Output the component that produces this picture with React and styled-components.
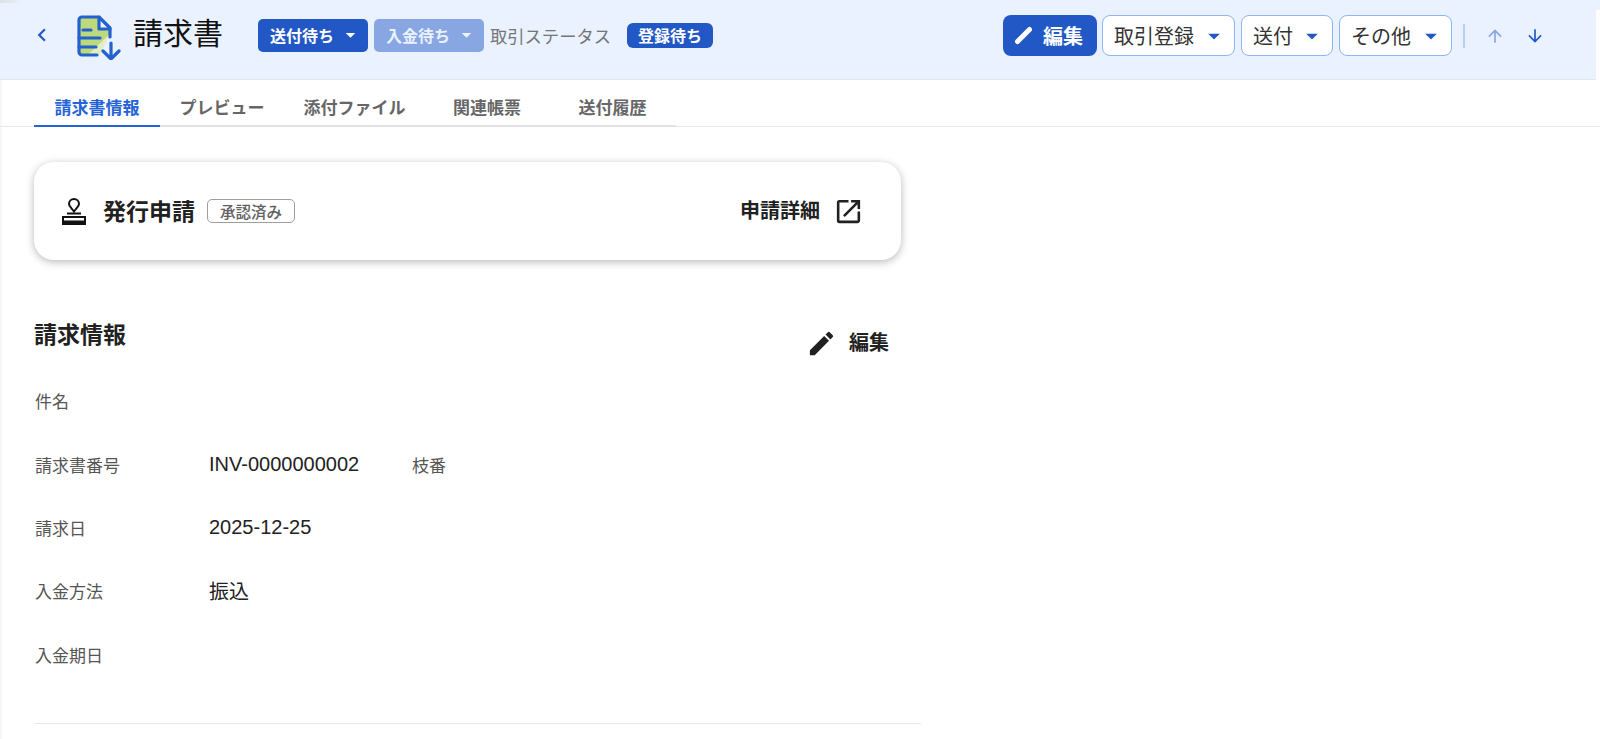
import React from 'react';
import styled, { createGlobalStyle } from 'styled-components';
import { MdEdit, MdOpenInNew, MdArrowDropDown, MdArrowUpward, MdArrowDownward, MdChevronLeft } from 'react-icons/md';

const FONT = `Roboto, "Noto Sans CJK JP", sans-serif`;

const GlobalStyle = createGlobalStyle`
  html, body {
    margin: 0;
    padding: 0;
    background: #fff;
    font-family: ${FONT};
    color: #212121;
    overflow: hidden;
  }
  * {
    box-sizing: border-box;
  }
`;

const Page = styled.div`
  width: 1600px;
  height: 739px;
  display: flex;
  flex-direction: column;
  background: linear-gradient(to right, #f3f3f3, #fff 3px);
`;

const Header = styled.header`
  position: relative;
  height: 80px;
  padding: 15px 55px 0 29px;
  display: flex;
  align-items: flex-start;
  background: #e9f2fe;
  border-bottom: 1px solid #e3e6ea;
  &::before {
    content: '';
    position: absolute;
    left: 0;
    top: 0;
    width: 22px;
    height: 3px;
    background: linear-gradient(to right, #dcdfe4, #e9f2fe);
  }
  &::after {
    content: '';
    position: absolute;
    right: 0;
    top: 10px;
    bottom: -1px;
    width: 4px;
    background: #fdfdfd;
  }
`;

const BackButton = styled.span`
  width: 26px;
  height: 40px;
  margin-right: 21px;
  display: flex;
  align-items: center;
  justify-content: center;
  color: #2258c5;
  font-size: 28px;
`;

const LogoSvg = styled.svg`
  width: 46px;
  height: 46px;
  margin-top: -1px;
  flex: none;
`;

const Title = styled.h1`
  margin: 0 35px 0 11px;
  font-size: 30px;
  line-height: 38px;
  font-weight: 400;
  color: #111;
`;

const StatusGroup = styled.div`
  height: 40px;
  display: flex;
  align-items: center;
  gap: 6px;
`;

const StatusButton = styled.span`
  width: 110px;
  height: 33px;
  padding: 0 6px 1px 12px;
  display: flex;
  align-items: center;
  gap: 5px;
  border-radius: 5px;
  background: ${(p) => (p.$muted ? '#88a6e2' : '#2258c5')};
  color: ${(p) => (p.$muted ? '#e9f2fe' : '#fff')};
  font-size: 16px;
  font-weight: 700;
  white-space: nowrap;
  svg {
    font-size: 24px;
  }
`;

const StatusLabel = styled.span`
  font-size: 17.3px;
  color: #757575;
`;

const StatusBadge = styled.span`
  width: 86px;
  height: 25px;
  margin-left: 10px;
  padding-bottom: 1px;
  display: flex;
  align-items: center;
  justify-content: center;
  border-radius: 6px;
  background: #2258c5;
  color: #fff;
  font-size: 16px;
  font-weight: 700;
`;

const Actions = styled.div`
  height: 41px;
  margin-left: auto;
  display: flex;
  align-items: center;
  gap: 6px;
`;

const PrimaryButton = styled.span`
  width: 94px;
  height: 41px;
  margin-right: -1px;
  padding-left: 11px;
  display: flex;
  align-items: center;
  gap: 10px;
  border-radius: 8px;
  background: #2258c5;
  color: #fff;
  font-size: 20px;
  font-weight: 700;
`;

const MenuButton = styled.span`
  width: ${(p) => p.$width}px;
  height: 41px;
  padding: 0 6px 0 11px;
  display: flex;
  align-items: center;
  justify-content: space-between;
  border: 1px solid #8fb4f2;
  border-radius: 8px;
  background: #fff;
  color: #333;
  font-size: 20px;
  svg {
    font-size: 28px;
    color: #2258c5;
  }
`;

const Divider = styled.span`
  width: 2px;
  height: 24px;
  margin: 0 14px 0 5px;
  background: #b7cdf2;
`;

const ArrowButton = styled.span`
  display: flex;
  color: ${(p) => (p.$faded ? '#88a6e2' : '#2258c5')};
  font-size: 20px;
  margin-right: ${(p) => (p.$faded ? 14 : 0)}px;
`;

const Tabs = styled.nav`
  height: 47px;
  display: flex;
  align-items: stretch;
  border-bottom: 1px solid #e8e8e8;
`;

const TabList = styled.div`
  margin-left: 34px;
  margin-bottom: -1px;
  display: flex;
  border-bottom: 2px solid #e3e3e3;
`;

const Tab = styled.span`
  width: ${(p) => p.$width}px;
  margin-bottom: -2px;
  padding-top: 17px;
  line-height: 23px;
  text-align: center;
  font-size: 17px;
  font-weight: 700;
  color: ${(p) => (p.$active ? '#2563d9' : '#666')};
  border-bottom: 2px solid ${(p) => (p.$active ? '#2563d9' : 'transparent')};
`;

const Content = styled.main`
  width: 887px;
  margin-left: 34px;
  padding-top: 35px;
`;

const ApplyCard = styled.section`
  width: 867px;
  height: 98px;
  padding: 0 37px 0 28px;
  display: flex;
  align-items: center;
  border-radius: 20px;
  background: #fff;
  box-shadow: 0 2px 8px rgba(0, 0, 0, 0.28);
`;

const StampIcon = styled.svg`
  width: 24px;
  height: 28px;
  margin-right: 17px;
`;

const CardTitle = styled.h2`
  margin: 0 12px 3px 0;
  font-size: 23px;
  font-weight: 700;
`;

const ApprovedTag = styled.span`
  width: 88px;
  height: 24px;
  padding-bottom: 1px;
  display: flex;
  align-items: center;
  justify-content: center;
  border: 1px solid #9e9e9e;
  border-radius: 5px;
  font-size: 15.5px;
  font-weight: 500;
  color: #616161;
`;

const DetailLink = styled.span`
  margin-left: auto;
  display: flex;
  align-items: center;
  gap: 13px;
  font-size: 20px;
  font-weight: 700;
  svg {
    font-size: 31px;
  }
`;

const LinkText = styled.span`
  margin-bottom: 3px;
`;

const SectionHead = styled.div`
  height: 56px;
  margin-top: 53px;
  padding-right: 32px;
  display: flex;
  justify-content: space-between;
`;

const SectionTitle = styled.h2`
  margin: 7px 0 0;
  font-size: 23px;
  line-height: 32px;
  font-weight: 700;
`;

const EditLink = styled.span`
  height: 34px;
  margin-top: 13px;
  display: flex;
  align-items: center;
  gap: 12px;
  font-size: 20px;
  font-weight: 700;
  svg {
    font-size: 31px;
  }
`;

const FieldList = styled.dl`
  margin: 0;
  padding-bottom: 37px;
  border-bottom: 1px solid #e8e8e8;
`;

const FieldRow = styled.div`
  height: 63.4px;
  padding-left: 1px;
  display: grid;
  grid-template-columns: 174px 203px auto;
  align-items: center;
`;

const FieldLabel = styled.dt`
  font-size: 17px;
  color: #555;
`;

const FieldValue = styled.dd`
  margin: 0;
  font-family: "Liberation Sans", "Noto Sans CJK JP", sans-serif;
  font-size: 20px;
  color: #222;
`;

function InvoiceIcon() {
  return (
    <LogoSvg viewBox="0 0 46 46" fill="none">
      <path d="M3 3h20v12h11v5L12 41H3z" fill="#bcd97c" />
      <path d="M34 20L24 41H12z" fill="#e2edc4" />
      <g stroke="#2461cf" strokeWidth="3.2" strokeLinecap="round" strokeLinejoin="round">
        <path d="M21 41H6a3 3 0 0 1-3-3V6a3 3 0 0 1 3-3h17l11 11v9" />
        <path d="M23 3v12h11" />
        <path d="M7 16h8M3 24h21M3 33h17" />
        <path d="M35 29v16M27 37l8 8 8-8" />
      </g>
    </LogoSvg>
  );
}

function SolidPencil() {
  return (
    <svg width="19" height="19" viewBox="0 0 19 19" fill="none">
      <path d="M3.5 15.5L15.5 3.5" stroke="#fff" strokeWidth="5" strokeLinecap="round" />
    </svg>
  );
}

export default function App() {
  return (
    <Page>
      <GlobalStyle />
      <Header>
        <BackButton>
          <MdChevronLeft />
        </BackButton>
        <InvoiceIcon />
        <Title>請求書</Title>
        <StatusGroup>
          <StatusButton>
            送付待ち
            <MdArrowDropDown />
          </StatusButton>
          <StatusButton $muted>
            入金待ち
            <MdArrowDropDown />
          </StatusButton>
          <StatusLabel>取引ステータス</StatusLabel>
          <StatusBadge>登録待ち</StatusBadge>
        </StatusGroup>
        <Actions>
          <PrimaryButton>
            <SolidPencil />
            編集
          </PrimaryButton>
          <MenuButton $width={133}>
            取引登録
            <MdArrowDropDown />
          </MenuButton>
          <MenuButton $width={92}>
            送付
            <MdArrowDropDown />
          </MenuButton>
          <MenuButton $width={113}>
            その他
            <MdArrowDropDown />
          </MenuButton>
          <Divider />
          <ArrowButton $faded>
            <MdArrowUpward />
          </ArrowButton>
          <ArrowButton>
            <MdArrowDownward />
          </ArrowButton>
        </Actions>
      </Header>
      <Tabs>
        <TabList>
          <Tab $active $width={126}>請求書情報</Tab>
          <Tab $width={124}>プレビュー</Tab>
          <Tab $width={141}>添付ファイル</Tab>
          <Tab $width={124}>関連帳票</Tab>
          <Tab $width={127}>送付履歴</Tab>
        </TabList>
      </Tabs>
      <Content>
        <ApplyCard>
          <StampIcon viewBox="0 0 24 28" fill="none">
            <path d="M12 2a5 5 0 0 1 5 5c0 2.5-3 4.5-5 7.5-2-3-5-5-5-7.5a5 5 0 0 1 5-5z" stroke="#111" strokeWidth="2" />
            <path d="M5 16.5h14" stroke="#111" strokeWidth="2" />
            <path d="M1 20h22v7H1z" stroke="#111" strokeWidth="2" />
            <path d="M1 23.5h22v4H1z" fill="#111" />
          </StampIcon>
          <CardTitle>発行申請</CardTitle>
          <ApprovedTag>承認済み</ApprovedTag>
          <DetailLink>
            <LinkText>申請詳細</LinkText>
            <MdOpenInNew />
          </DetailLink>
        </ApplyCard>
        <SectionHead>
          <SectionTitle>請求情報</SectionTitle>
          <EditLink>
            <MdEdit />
            <LinkText>編集</LinkText>
          </EditLink>
        </SectionHead>
        <FieldList>
          <FieldRow>
            <FieldLabel>件名</FieldLabel>
          </FieldRow>
          <FieldRow>
            <FieldLabel>請求書番号</FieldLabel>
            <FieldValue>INV-0000000002</FieldValue>
            <FieldLabel>枝番</FieldLabel>
          </FieldRow>
          <FieldRow>
            <FieldLabel>請求日</FieldLabel>
            <FieldValue>2025-12-25</FieldValue>
          </FieldRow>
          <FieldRow>
            <FieldLabel>入金方法</FieldLabel>
            <FieldValue>振込</FieldValue>
          </FieldRow>
          <FieldRow>
            <FieldLabel>入金期日</FieldLabel>
          </FieldRow>
        </FieldList>
      </Content>
    </Page>
  );
}
